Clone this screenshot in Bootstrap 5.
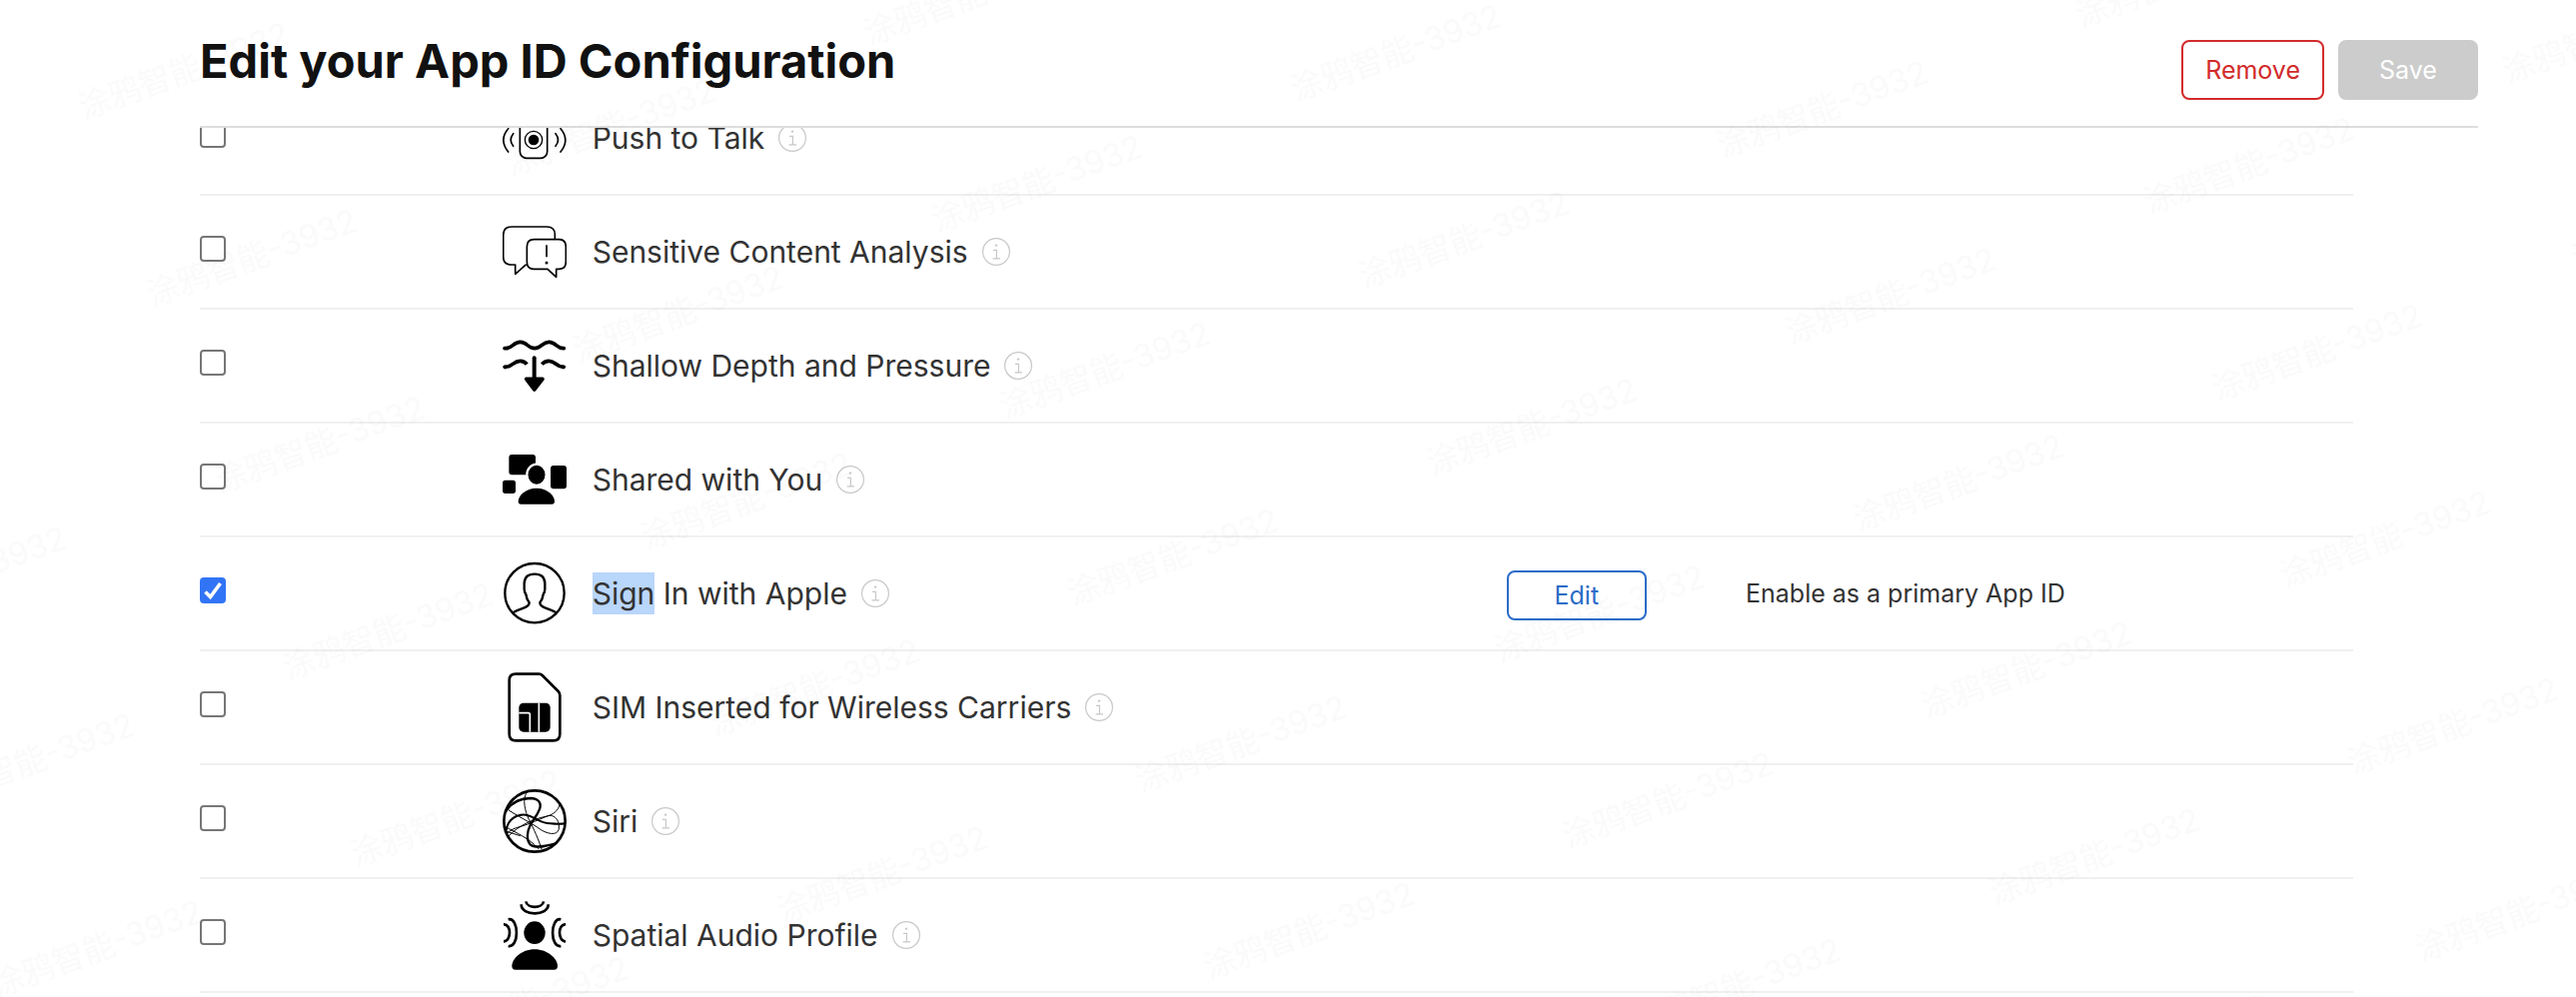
<!DOCTYPE html>
<html lang="en">
<head>
<meta charset="utf-8">
<meta name="viewport" content="width=device-width, initial-scale=1">
<title>Edit your App ID Configuration</title>
<link href="https://cdn.jsdelivr.net/npm/bootstrap@5.3.0/dist/css/bootstrap.min.css" rel="stylesheet">
<style>
  body { font-family: Inter, "Liberation Sans", sans-serif; color: #333; background: #fff; }
  .page-pad { padding-left: 200px; padding-right: 98px; }
  .title-bar { height: 128px; border-bottom: 2px solid #ddd; }
  .page-title { font-size: 47px; line-height: 56px; font-weight: 700; color: #111; margin-top: 33px; }
  .actions { gap: 14px; margin-top: 40px; }
  .action { height: 60px; min-width: 140px; padding: 0 22px; font-size: 25px; line-height: 32px; border: 2px solid; border-radius: 8px; --bs-btn-disabled-opacity: 1; }
  .action-remove, .action-remove:hover { color: #d22b2b; border-color: #d22b2b; background: #fff; }
  .action-save, .action-save:disabled { color: #fff; background: #ccc; border-color: #ccc; }
  .action-edit, .action-edit:hover { height: 50px; color: #2b6cc8; border-color: #2b6cc8; background: #fff; }
  /* the list is scrolled part of the way under the title bar */
  .capabilities { width: 94.5%; margin-top: -47px; table-layout: fixed; color: #333; }
  .capabilities tr { height: 114px; border-bottom: 2px solid #f0f0f0; }
  .capabilities td { padding: 0; }
  .col-check { width: 14%; }
  .col-name { width: 46.7%; }
  .col-edit { width: 11.1%; }
  .tick { width: 26px; height: 26px; margin: 0 0 6px; border: 2px solid #767676; border-radius: 5px; display: block; float: none; }
  .tick:checked { background-color: #3274f6; border-color: #3274f6; }
  .tick:checked[type=checkbox] { background-size: 22px 22px; background-image: url("data:image/svg+xml,%3csvg xmlns='http://www.w3.org/2000/svg' viewBox='0 0 22 22'%3e%3cpath d='M3.5 12.5L8.5 17.5L18.5 4' fill='none' stroke='%23fff' stroke-width='3.6'/%3e%3c/svg%3e"); }
  .cap-icon { width: 64px; height: 72px; flex: none; margin-left: 1px; }
  .cap-name { font-size: 30px; line-height: 42px; padding-left: 26px; }
  .cap-note { font-size: 25px; line-height: 32px; }
  .picked { background: #b9d6fb; display: inline-block; }
  .info-btn { width: 28px; height: 28px; flex: none; margin-left: 14px; }
  .stamp { z-index: 10; pointer-events: none; font-family: Inter, "Noto Sans CJK SC", sans-serif; font-size: 32px; }
</style>
</head>
<body>
<svg class="d-none" aria-hidden="true">
  <symbol id="info" viewBox="0 0 28 28">
    <circle cx="14" cy="14" r="13.4" fill="none" stroke="#c8c8c8" stroke-width="1.2"/>
    <path d="M11 12.3h3.4v8.4M10.6 20.9h7.4" fill="none" stroke="#c8c8c8" stroke-width="1.2"/>
    <circle cx="14" cy="7.6" r="1.2" fill="#c8c8c8"/>
  </symbol>
</svg>
<div class="vh-100 d-flex flex-column overflow-hidden position-relative">
  <header class="page-pad">
    <div class="title-bar d-flex justify-content-between align-items-start">
      <h1 class="page-title mb-0">Edit your App ID Configuration</h1>
      <div class="actions d-flex">
        <button type="button" class="btn action action-remove">Remove</button>
        <button type="button" class="btn action action-save" disabled>Save</button>
      </div>
    </div>
  </header>
  <main class="page-pad flex-grow-1 overflow-hidden">
    <table class="capabilities align-middle">
      <colgroup><col class="col-check"><col class="col-name"><col class="col-edit"><col></colgroup>
      <tbody>
        <tr>
          <td><input class="form-check-input tick" type="checkbox" id="c1"></td>
          <td><div class="d-flex align-items-center">
            <svg class="cap-icon" viewBox="69 -54 192 216" fill="none" stroke="#000" stroke-width="5" stroke-linecap="round"><rect x="121" y="-8" width="82" height="123" rx="20"/><circle cx="162" cy="60" r="26" stroke-width="4"/><circle cx="162" cy="60" r="16" fill="#000" stroke="none"/><path d="M101 41q-15 19 0 38M86 26q-29 34 0 70M228 41q15 19 0 38M243 26q29 34 0 70"/></svg>
            <label class="cap-name" for="c1">Push to Talk</label>
            <button type="button" class="btn p-0 border-0 info-btn d-flex" aria-label="About Push to Talk"><svg width="28" height="28"><use href="#info"/></svg></button>
          </div></td><td></td><td></td>
        </tr>
        <tr>
          <td><input class="form-check-input tick" type="checkbox" id="c2"></td>
          <td><div class="d-flex align-items-center">
            <svg class="cap-icon" viewBox="69 288 192 216" fill="none" stroke="#000" stroke-width="5" stroke-linejoin="round"><path d="M226 357V344Q226 321 202 321H96Q71 321 71 346V411Q71 435 96 435H107V463L140 434"/><path d="M163 359H238Q259 359 259 381V426Q259 448 238 448H230V472L204 448H163Q142 448 142 426V381Q142 359 163 359Z"/><path d="M201 376V412"/><circle cx="201" cy="429" r="4.5" fill="#000" stroke="none"/></svg>
            <label class="cap-name" for="c2">Sensitive Content Analysis</label>
            <button type="button" class="btn p-0 border-0 info-btn d-flex" aria-label="About Sensitive Content Analysis"><svg width="28" height="28"><use href="#info"/></svg></button>
          </div></td><td></td><td></td>
        </tr>
        <tr>
          <td><input class="form-check-input tick" type="checkbox" id="c3"></td>
          <td><div class="d-flex align-items-center">
            <svg class="cap-icon" viewBox="69 30 192 216" fill="none" stroke="#000" stroke-width="11" stroke-linecap="round" stroke-linejoin="round"><path d="M75 86C98 88 100 67 122 67S143 86 165 86S187 67 208 67S232 88 253 86"/><path d="M75 142C98 144 100 124 122 124Q134 124 142 134M253 142C232 144 229 124 208 124Q195 124 187 134" stroke-linecap="butt"/><path d="M75 142h2M251 142h2"/><path d="M164 115V180" stroke-width="12"/><path d="M140 178H189L164 210Z" fill="#000"/></svg>
            <label class="cap-name" for="c3">Shallow Depth and Pressure</label>
            <button type="button" class="btn p-0 border-0 info-btn d-flex" aria-label="About Shallow Depth and Pressure"><svg width="28" height="28"><use href="#info"/></svg></button>
          </div></td><td></td><td></td>
        </tr>
        <tr>
          <td><input class="form-check-input tick" type="checkbox" id="c4"></td>
          <td><div class="d-flex align-items-center">
            <svg class="cap-icon" viewBox="69 372 192 216"><rect x="88" y="405" width="80" height="61" rx="9"/><rect x="213" y="438" width="48" height="70" rx="9"/><rect x="69" y="482" width="39" height="40" rx="8"/><ellipse cx="171" cy="466" rx="29" ry="32" stroke="#fff" stroke-width="7"/><path d="M171 506C204 506 225 529 225 545Q225 554 217 554H124Q116 554 116 545C116 529 138 506 171 506Z"/></svg>
            <label class="cap-name" for="c4">Shared with You</label>
            <button type="button" class="btn p-0 border-0 info-btn d-flex" aria-label="About Shared with You"><svg width="28" height="28"><use href="#info"/></svg></button>
          </div></td><td></td><td></td>
        </tr>
        <tr>
          <td><input class="form-check-input tick" type="checkbox" id="c5" checked></td>
          <td><div class="d-flex align-items-center">
            <svg class="cap-icon" viewBox="69 54 192 216" fill="none" stroke="#000" stroke-width="7" stroke-linejoin="round"><circle cx="165" cy="161" r="89"/><path d="M101 219Q115 212 132 206Q149 200 149 190Q141 180 139 165Q134 158 134 149V132Q135 104 165 104T196 132V149Q196 158 191 165Q189 180 181 190Q181 200 198 206Q215 212 229 219"/></svg>
            <label class="cap-name" for="c5"><span class="picked">Sign</span> In with Apple</label>
            <button type="button" class="btn p-0 border-0 info-btn d-flex" aria-label="About Sign In with Apple"><svg width="28" height="28"><use href="#info"/></svg></button>
          </div></td>
          <td><button type="button" class="btn action action-edit py-0 mt-1">Edit</button></td>
          <td class="cap-note">Enable as a primary App ID</td>
        </tr>
        <tr>
          <td><input class="form-check-input tick" type="checkbox" id="c6"></td>
          <td><div class="d-flex align-items-center">
            <svg class="cap-icon" viewBox="69 396 192 216"><path d="M108 404H178Q184 404 188 408L236 456Q241 461 241 468V584Q241 604 221 604H109Q89 604 89 584V423Q89 404 108 404Z" fill="none" stroke="#000" stroke-width="8"/><rect x="118" y="491" width="94" height="87" rx="14"/><path d="M118 521H146Q151 521 151 526V578M178 491V578" fill="none" stroke="#fff" stroke-width="5"/></svg>
            <label class="cap-name" for="c6">SIM Inserted for Wireless Carriers</label>
            <button type="button" class="btn p-0 border-0 info-btn d-flex" aria-label="About SIM Inserted for Wireless Carriers"><svg width="28" height="28"><use href="#info"/></svg></button>
          </div></td><td></td><td></td>
        </tr>
        <tr>
          <td><input class="form-check-input tick" type="checkbox" id="c7"></td>
          <td><div class="d-flex align-items-center">
            <svg class="cap-icon" viewBox="69 48 192 216" fill="none" stroke="#000" stroke-width="7"><circle cx="165" cy="156" r="92" stroke-width="8"/><path d="M78 128C95 96 130 88 152 87C176 87 188 102 179 122C172 142 160 150 151 170C142 188 140 214 152 226C168 240 204 230 226 224"/><path d="M80 184C84 150 112 134 138 137C164 140 178 162 212 163Q240 166 257 163" stroke-width="6"/><path d="M144 68C130 80 132 112 144 142C156 168 172 196 186 240M82 119C110 140 152 158 184 182C214 200 240 196 238 174C240 150 220 132 200 142C176 152 150 164 124 172C104 176 92 184 80 194M240 107C236 124 220 138 198 142C170 148 120 164 84 204M76 172C108 190 150 208 178 240M78 186L122 200" stroke-width="3"/></svg>
            <label class="cap-name" for="c7">Siri</label>
            <button type="button" class="btn p-0 border-0 info-btn d-flex" aria-label="About Siri"><svg width="28" height="28"><use href="#info"/></svg></button>
          </div></td><td></td><td></td>
        </tr>
        <tr>
          <td><input class="form-check-input tick" type="checkbox" id="c8"></td>
          <td><div class="d-flex align-items-center">
            <svg class="cap-icon" viewBox="69 390 192 216" fill="none" stroke="#000" stroke-width="8"><ellipse cx="165" cy="491" rx="32" ry="34" fill="#000" stroke="none"/><path d="M165 541C205 541 234 570 234 591Q234 602 224 602H107Q97 602 97 591C97 570 125 541 165 541Z" fill="#000" stroke="none"/><path d="M139 397C142 419 189 419 192 397M125 406C124 442 207 442 206 406M72 466C96 464 96 517 72 517M86 451C119 444 119 538 86 531M258 466C234 464 234 517 258 517M244 451C211 444 211 538 244 531"/></svg>
            <label class="cap-name" for="c8">Spatial Audio Profile</label>
            <button type="button" class="btn p-0 border-0 info-btn d-flex" aria-label="About Spatial Audio Profile"><svg width="28" height="28"><use href="#info"/></svg></button>
          </div></td><td></td><td></td>
        </tr>
      </tbody>
    </table>
  </main>
  <!-- viewer stamp, tiled on the slant over the whole page -->
  <svg class="stamp position-absolute top-0 start-0 w-100 h-100" aria-hidden="true">
    <defs>
      <pattern id="stampTile" width="382" height="199" patternUnits="userSpaceOnUse" patternTransform="translate(2037 136) rotate(-20)">
        <text x="191" y="112" text-anchor="middle" fill="#000" fill-opacity=".02">涂鸦智能-3932</text>
      </pattern>
    </defs>
    <rect width="100%" height="100%" fill="url(#stampTile)"/>
  </svg>
</div>
<script src="https://cdn.jsdelivr.net/npm/bootstrap@5.3.0/dist/js/bootstrap.bundle.min.js"></script>
</body>
</html>
